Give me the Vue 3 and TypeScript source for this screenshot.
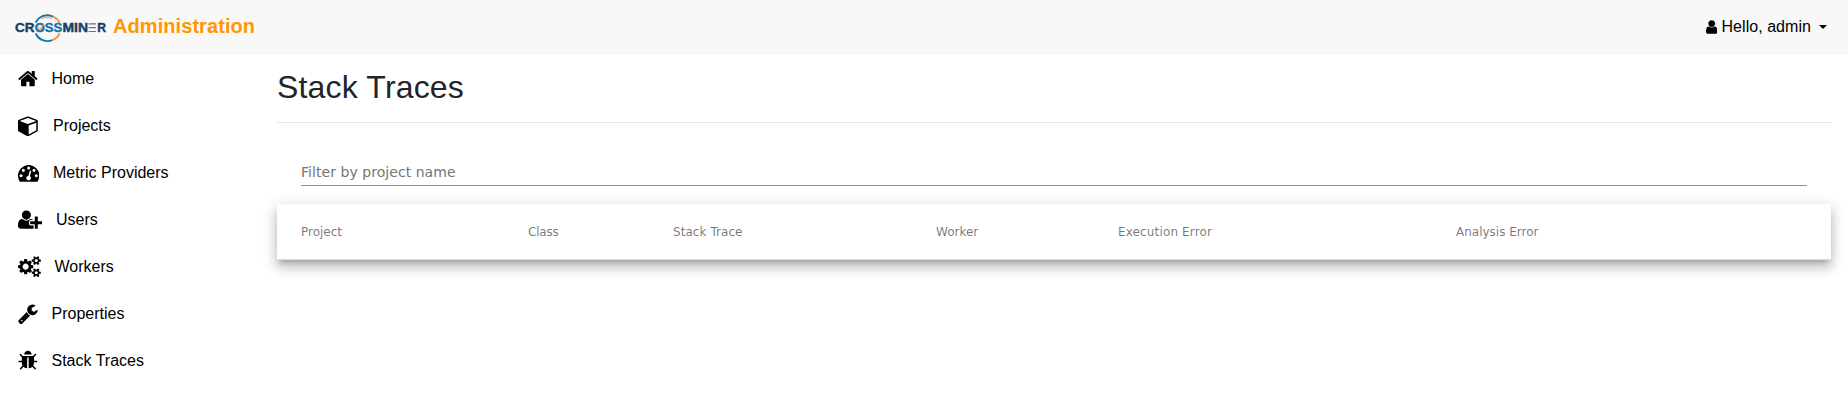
<script setup lang="ts">
interface NavItem {
  label: string
  viewBox: string
  width: number
  path: string
}

interface Column {
  label: string
  fit?: string
}

const smallGear =
  'v140q0 16-149 31-12 27-30 52 51 113 51 138 0 4-4 7-122 71-124 71-8 0-46-47t-52-68q-20 2-30 2t-30-2q-14 21-52 68t-46 47q-2 0-124-71-4-3-4-7 0-25 51-138-18-25-30-52-149-15-149-31v-140q0-16 149-31 13-29 30-52-51-113-51-138 0-4 4-7 4-2 35-20t59-34 30-16q8 0 46 46.5t52 67.5q20-2 30-2t30 2q51-71 92-112l6-2q4 0 124 70 4 3 4 7 0 25-51 138 17 23 30 52 149 15 149 31z'

const userPath =
  'M1536 1399q0 109-62.5 187t-150.5 78h-854q-88 0-150.5-78t-62.5-187q0-85 8.5-160.5t31.5-152 58.5-131 94-89 134.5-34.5q131 128 313 128t313-128q76 0 134.5 34.5t94 89 58.5 131 31.5 152 8.5 160.5zm-256-887q0 159-112.5 271.5t-271.5 112.5-271.5-112.5-112.5-271.5 112.5-271.5 271.5-112.5 271.5 112.5 112.5 271.5z'

const items: NavItem[] = [
  {
    label: 'Home',
    viewBox: '64 0 1664 1792',
    width: 19.81,
    path: 'M1472 992v480q0 26-19 45t-45 19h-384v-384h-256v384h-384q-26 0-45-19t-19-45v-480q0-1 .5-3t.5-3l575-474 575 474q1 2 1 6zm223-69l-62 74q-8 9-21 11h-3q-13 0-21-7l-692-577-692 577q-12 8-24 7-13-2-21-11l-62-74q-8-10-7-23.5t11-21.5l719-599q32-26 76-26t76 26l244 204v-195q0-14 9-23t23-9h192q14 0 23 9t9 23v408l219 182q10 8 11 21.5t-7 23.5z',
  },
  {
    label: 'Projects',
    viewBox: '0 0 1792 1792',
    width: 21.33,
    path: 'M896 1629l640-349v-636l-640 233v752zm-64-865l698-254-698-254-698 254zm832-252v768q0 35-18 65t-49 47l-704 384q-28 16-61 16t-61-16l-704-384q-31-17-49-47t-18-65v-768q0-40 23-73t61-47l704-256q22-8 44-8t44 8l704 256q38 14 61 47t23 73z',
  },
  {
    label: 'Metric Providers',
    viewBox: '0 0 1792 1792',
    width: 21.33,
    path: 'M384 1152q0-53-37.5-90.5t-90.5-37.5-90.5 37.5-37.5 90.5 37.5 90.5 90.5 37.5 90.5-37.5 37.5-90.5zm192-448q0-53-37.5-90.5t-90.5-37.5-90.5 37.5-37.5 90.5 37.5 90.5 90.5 37.5 90.5-37.5 37.5-90.5zm428 481l101-382q6-26-7.5-48.5t-38.5-29.5-48 6.5-30 39.5l-101 382q-60 5-107 43.5t-63 98.5q-20 77 20 146t117 89 146-20 89-117q16-60-6-117t-72-91zm660-33q0-53-37.5-90.5t-90.5-37.5-90.5 37.5-37.5 90.5 37.5 90.5 90.5 37.5 90.5-37.5 37.5-90.5zm-640-640q0-53-37.5-90.5t-90.5-37.5-90.5 37.5-37.5 90.5 37.5 90.5 90.5 37.5 90.5-37.5 37.5-90.5zm448 192q0-53-37.5-90.5t-90.5-37.5-90.5 37.5-37.5 90.5 37.5 90.5 90.5 37.5 90.5-37.5 37.5-90.5zm320 448q0 261-141 483-19 29-54 29h-1402q-35 0-54-29-141-221-141-483 0-182 71-348t191-286 286-191 348-71 348 71 286 191 191 286 71 348z',
  },
  {
    label: 'Users',
    viewBox: '0 0 2048 1792',
    width: 24.38,
    path: 'M704 896q-159 0-271.5-112.5t-112.5-271.5 112.5-271.5 271.5-112.5 271.5 112.5 112.5 271.5-112.5 271.5-271.5 112.5zm960 128h352q13 0 22.5 9.5t9.5 22.5v192q0 13-9.5 22.5t-22.5 9.5h-352v352q0 13-9.5 22.5t-22.5 9.5h-192q-13 0-22.5-9.5t-9.5-22.5v-352h-352q-13 0-22.5-9.5t-9.5-22.5v-192q0-13 9.5-22.5t22.5-9.5h352v-352q0-13 9.5-22.5t22.5-9.5h192q13 0 22.5 9.5t9.5 22.5v352zm-736 224q0 52 38 90t90 38h256v238q-68 50-171 50h-874q-121 0-194-69t-73-190q0-53 3.5-103.5t14-109 26.5-108.5 43-97.5 62-81 85.5-53.5 111.5-20q19 0 39 17 79 61 154.5 91.5t164.5 30.5 164.5-30.5 154.5-91.5q20-17 39-17 132 0 217 96h-223q-52 0-90 38t-38 90v192z',
  },
  {
    label: 'Workers',
    viewBox: '0 0 1920 1792',
    width: 22.86,
    path:
      'M896 896q0-106-75-181t-181-75-181 75-75 181 75 181 181 75 181-75 75-181zm768 512q0-52-38-90t-90-38-90 38-38 90q0 53 37.5 90.5t90.5 37.5 90.5-37.5 37.5-90.5zm0-1024q0-52-38-90t-90-38-90 38-38 90q0 53 37.5 90.5t90.5 37.5 90.5-37.5 37.5-90.5zm-384 421v185q0 10-7 19.5t-16 10.5l-155 24q-11 35-32 76 34 48 90 115 7 11 7 20 0 12-7 19-23 30-82.5 89.5t-78.5 59.5q-11 0-21-7l-115-90q-37 19-77 31-11 108-23 155-7 24-30 24h-186q-11 0-20-7.5t-10-17.5l-23-153q-34-10-75-31l-118 89q-7 7-20 7-11 0-21-8-144-133-144-160 0-9 7-19 10-14 41-53t47-61q-23-44-35-82l-152-24q-10-1-17-9.5t-7-19.5v-185q0-10 7-19.5t16-10.5l155-24q11-35 32-76-34-48-90-115-7-11-7-20 0-12 7-20 22-30 82-89t79-59q11 0 21 7l115 90q34-18 77-32 11-108 23-154 7-24 30-24h186q11 0 20 7.5t10 17.5l23 153q34 10 75 31l118-89q8-7 20-7 11 0 21 8 144 133 144 160 0 8-7 19-12 16-42 54t-45 60q23 48 34 82l152 23q10 2 17 10.5t7 19.5z' +
      'M1920 1338' + smallGear + 'M1920 314' + smallGear,
  },
  {
    label: 'Properties',
    viewBox: '64 0 1664 1792',
    width: 19.81,
    path: 'M448 1472q0-26-19-45t-45-19-45 19-19 45 19 45 45 19 45-19 19-45zm644-420l-682 682q-37 37-90 37-52 0-91-37l-106-108q-38-36-38-90 0-53 38-91l681-681q39 98 114.5 173.5t173.5 114.5zm634-435q0 39-23 106-47 134-164.5 217.5t-258.5 83.5q-185 0-316.5-131.5t-131.5-316.5 131.5-316.5 316.5-131.5q58 0 121.5 16.5t107.5 46.5q16 11 16 28t-16 28l-293 169v224l193 107q5-3 79-48.5t135.5-81 70.5-35.5q15 0 23.5 10t8.5 25z',
  },
  {
    label: 'Stack Traces',
    viewBox: '64 0 1664 1792',
    width: 19.81,
    path: 'M1696 960q0 26-19 45t-45 19h-224q0 171-67 290l208 209q19 19 19 45t-19 45q-18 19-45 19t-45-19l-198-197q-5 5-15 13t-42 28.5-65 36.5-82 29-97 13v-896h-128v896q-51 0-101.5-13.5t-87-33-66-39-43.5-32.5l-15-14-183 207q-20 21-48 21-24 0-43-16-19-18-20.5-44.5t15.5-46.5l202-227q-58-114-58-274h-224q-26 0-45-19t-19-45 19-45 45-19h224v-294l-173-173q-19-19-19-45t19-45 45-19 45 19l173 173h844l173-173q19-19 45-19t45 19 19 45-19 45l-173 173v294h224q26 0 45 19t19 45zm-480-576h-640q0-133 93.5-226.5t226.5-93.5 226.5 93.5 93.5 226.5z',
  },
]

const columns: Column[] = [
  { label: 'Project' },
  { label: 'Class', fit: 'tight' },
  { label: 'Stack Trace', fit: 'loose' },
  { label: 'Worker' },
  { label: 'Execution Error', fit: 'wide' },
  { label: 'Analysis Error' },
]
</script>

<template>
  <div class="page">
    <header class="topbar">
      <a class="brand">
        <svg class="logo" width="92" height="30" viewBox="0 0 92 30">
          <g fill="none" stroke-width="1.9">
            <path d="M20.800 9.500A12.700 12.700 0 0 1 38 3.600" stroke="#0f75ae" />
            <path d="M38 3.600A12.700 12.700 0 0 1 44.600 9.500" stroke="#f79548" />
            <path d="M20.800 20.500A12.700 12.700 0 0 0 37.500 27" stroke="#0f75ae" />
            <path d="M37.500 27A12.700 12.700 0 0 0 44.600 20.500" stroke="#f79548" />
            <path d="M26 6Q32 2.800 37 6" stroke="#f79548" stroke-width="1" />
          </g>
          <g class="wordmark">
            <text x="0" y="19" textLength="19.500" lengthAdjust="spacingAndGlyphs" fill="#173f6d" stroke="#173f6d">CR</text>
            <text x="19.700" y="19" textLength="27.500" lengthAdjust="spacingAndGlyphs" fill="#0f75ae" stroke="#0f75ae">OSS</text>
            <text x="47.500" y="19" textLength="25.500" lengthAdjust="spacingAndGlyphs" fill="#173f6d" stroke="#173f6d">MIN</text>
            <text x="82.200" y="19" textLength="8.800" lengthAdjust="spacingAndGlyphs" fill="#173f6d" stroke="#173f6d">R</text>
          </g>
          <path d="M73.500 10.800h7.500M73.500 14.700h7.500M73.500 18.500h7.500" stroke="#5d7898" stroke-width="1.200" />
          <path d="M22.500 14.500l2.500 2.500 4-6" fill="none" stroke="#f79548" stroke-width="1.300" />
        </svg>
        <span class="brand-name">Administration</span>
      </a>
      <a class="account">
        <svg class="account-icon" viewBox="256 0 1280 1792"><path :d="userPath" /></svg>
        <span>Hello, admin</span>
        <i class="caret"></i>
      </a>
    </header>

    <div class="body">
      <nav class="sidebar">
        <a v-for="item in items" :key="item.label" class="nav-item">
          <svg :width="item.width" height="21.330" :viewBox="item.viewBox"><path :d="item.path" /></svg>
          <span>{{ item.label }}</span>
        </a>
      </nav>

      <main class="content">
        <h2>Stack Traces</h2>
        <div class="filter">
          <input type="text" placeholder="Filter by project name" />
        </div>
        <div class="table">
          <div v-for="column in columns" :key="column.label" class="cell" :class="column.fit">{{ column.label }}</div>
        </div>
      </main>
    </div>
  </div>
</template>

<style>
body {
  background: #fff;
}
</style>

<style scoped>
.page {
  height: 402px;
  overflow: hidden;
  font: 16px/24px 'Liberation Sans', Arial, sans-serif;
  color: #000;
}
.topbar {
  height: 55px;
  box-sizing: border-box;
  padding: 0 21px 3px 14.5px;
  display: flex;
  align-items: center;
  justify-content: space-between;
  background: #f8f8f8;
}
.brand,
.account {
  display: flex;
  align-items: center;
}
.account {
  margin-top: 2px;
  letter-spacing: 0.05px;
}
.logo {
  display: block;
  margin-top: 3px;
  overflow: visible;
}
.wordmark {
  font: bold 12px 'Liberation Sans', Arial, sans-serif;
  stroke-width: 0.4px;
}
.brand-name {
  margin-left: 6.5px;
  font-size: 20px;
  font-weight: bold;
  letter-spacing: 0.07px;
  color: #ff9800;
}
.account-icon {
  width: 11.43px;
  height: 16px;
  margin: 0 4px 1px 0;
}
.caret {
  margin-left: 8px;
  border: 4.8px solid transparent;
  border-top-color: #000;
  border-bottom: 0;
}
.body {
  display: flex;
}
.sidebar {
  width: 277px;
  flex: none;
}
.nav-item {
  display: flex;
  align-items: center;
  height: 47px;
  padding-left: 18px;
}
.nav-item svg {
  margin-right: 13.7px;
}
.content {
  flex: 1;
  margin-right: 17px;
}
h2 {
  margin: 0;
  height: 68px;
  box-sizing: border-box;
  padding-top: 13px;
  border-bottom: 1px solid rgba(0, 0, 0, 0.1);
  font-size: 32px;
  line-height: 38.4px;
  font-weight: 500;
  letter-spacing: 0.17px;
  color: #212529;
}
.filter {
  margin: 37px 24px 18px;
  height: 26px;
  box-sizing: border-box;
  border-bottom: 1px solid #949494;
}
input {
  display: block;
  width: 100%;
  height: 24px;
  padding: 0;
  border: 0;
  outline: 0;
  background: none;
  font: 14px 'DejaVu Sans', sans-serif;
  letter-spacing: 0.05px;
}
input::placeholder {
  color: #757575;
}
.table {
  display: grid;
  grid-template-columns: 227px 145px 263px 182px 338px 1fr;
  align-items: center;
  height: 56px;
  box-sizing: border-box;
  padding: 0 24px;
  background: #fff;
  border-bottom: 1px solid rgba(0, 0, 0, 0.12);
  box-shadow:
    0 5px 5px -3px rgba(0, 0, 0, 0.2),
    0 8px 10px 1px rgba(0, 0, 0, 0.14),
    0 3px 14px 2px rgba(0, 0, 0, 0.12);
}
.cell {
  font: 12px 'DejaVu Sans', sans-serif;
  color: rgba(0, 0, 0, 0.54);
}
.tight {
  letter-spacing: -0.2px;
}
.loose {
  letter-spacing: 0.06px;
}
.wide {
  letter-spacing: 0.14px;
}
</style>
